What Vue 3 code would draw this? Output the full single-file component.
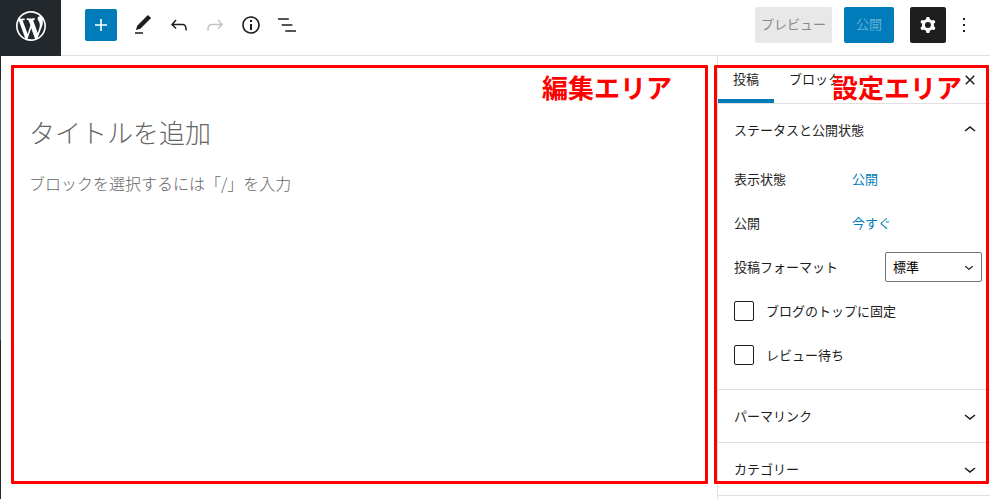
<template>
  <div class="editor">
    <header class="header">
      <a href="#" class="logo" aria-label="投稿一覧">
        <svg viewBox="-2 -2 24 24" width="36" height="36" aria-hidden="true">
          <path :d="icons.wordpress" />
        </svg>
      </a>
      <div class="toolbar">
        <button type="button" class="inserter" aria-label="ブロックを追加">
          <svg viewBox="0 0 24 24" width="24" height="24"><path :d="icons.plus" /></svg>
        </button>
        <button
          v-for="tool in tools"
          :key="tool.icon"
          type="button"
          class="icon-button"
          :aria-label="tool.label"
          :disabled="tool.disabled"
        >
          <svg viewBox="0 0 24 24" width="24" height="24"><path :d="icons[tool.icon]" /></svg>
        </button>
      </div>
      <div class="actions">
        <button type="button" class="preview" disabled>プレビュー</button>
        <button type="button" class="publish" disabled>公開</button>
        <button type="button" class="icon-button settings" aria-label="設定">
          <svg viewBox="0 0 24 24" width="24" height="24">
            <path fill-rule="evenodd" :d="icons.cog" />
          </svg>
        </button>
        <button type="button" class="icon-button" aria-label="オプション">
          <svg viewBox="0 0 24 24" width="24" height="24"><path :d="icons.more" /></svg>
        </button>
      </div>
    </header>

    <div class="body">
      <main class="content">
        <input v-model="title" class="title" placeholder="タイトルを追加" aria-label="タイトルを追加" />
        <input
          v-model="text"
          class="paragraph"
          placeholder="ブロックを選択するには「/」を入力"
          aria-label="ブロック"
        />
        <div class="area area-edit"><span class="area-name">編集エリア</span></div>
      </main>

      <aside class="sidebar">
        <div class="tabs">
          <button type="button" class="tab active">投稿</button>
          <button type="button" class="tab">ブロック</button>
          <button type="button" class="icon-button close" aria-label="設定を閉じる">
            <svg viewBox="0 0 24 24" width="24" height="24"><path :d="icons.close" /></svg>
          </button>
        </div>

        <section class="panel">
          <button type="button" class="panel-title" @click="open = !open">
            <span>ステータスと公開状態</span>
            <svg viewBox="0 0 24 24" width="24" height="24">
              <path :d="open ? icons.up : icons.down" />
            </svg>
          </button>
          <div v-if="open" class="panel-body">
            <div class="row">
              <span class="row-label">表示状態</span>
              <a href="#">公開</a>
            </div>
            <div class="row">
              <span class="row-label">公開</span>
              <a href="#">今すぐ</a>
            </div>
            <div class="row">
              <label class="format-label" for="post-format">投稿フォーマット</label>
              <div class="select">
                <select id="post-format" v-model="format">
                  <option value="standard">標準</option>
                </select>
                <svg viewBox="0 0 24 24" width="18" height="18"><path :d="icons.down" /></svg>
              </div>
            </div>
            <div class="row">
              <input id="sticky" v-model="sticky" type="checkbox" />
              <label for="sticky">ブログのトップに固定</label>
            </div>
            <div class="row">
              <input id="pending" v-model="pending" type="checkbox" />
              <label for="pending">レビュー待ち</label>
            </div>
          </div>
        </section>

        <section v-for="name in ['パーマリンク', 'カテゴリー']" :key="name" class="panel">
          <button type="button" class="panel-title">
            <span>{{ name }}</span>
            <svg viewBox="0 0 24 24" width="24" height="24"><path :d="icons.down" /></svg>
          </button>
        </section>
        <div class="area area-settings"><span class="area-name">設定エリア</span></div>
      </aside>
    </div>
  </div>
</template>

<script setup>
import { ref } from 'vue'

const title = ref('')
const text = ref('')
const open = ref(true)
const format = ref('standard')
const sticky = ref(false)
const pending = ref(false)

const tools = [
  { icon: 'edit', label: 'ツール' },
  { icon: 'undo', label: '元に戻す' },
  { icon: 'redo', label: 'やり直す', disabled: true },
  { icon: 'info', label: '詳細' },
  { icon: 'list', label: 'リスト表示' },
]

const icons = {
  wordpress:
    'M20 10c0-5.51-4.49-10-10-10C4.48 0 0 4.49 0 10c0 5.52 4.48 10 10 10 5.51 0 10-4.48 10-10zM7.78 15.37L4.37 6.22c.55-.02 1.17-.08 1.17-.08.5-.06.44-1.13-.06-1.11 0 0-1.45.11-2.37.11-.18 0-.37 0-.58-.01C4.12 2.69 6.87 1.11 10 1.11c2.33 0 4.45.87 6.05 2.34-.68-.11-1.65.39-1.65 1.58 0 .74.45 1.36.9 2.1.35.61.55 1.36.55 2.46 0 1.49-1.4 5-1.4 5l-3.03-8.37c.54-.02.82-.17.82-.17.5-.05.44-1.25-.06-1.22 0 0-1.44.12-2.38.12-.87 0-2.33-.12-2.33-.12-.5-.03-.56 1.2-.06 1.22l.92.08 1.26 3.41zM17.41 10c.24-.64.74-1.87.43-4.25.7 1.29 1.05 2.71 1.05 4.25 0 3.29-1.73 6.24-4.4 7.78.97-2.59 1.94-5.2 2.92-7.78zM6.1 18.09C3.12 16.65 1.11 13.53 1.11 10c0-1.3.23-2.48.72-3.59C3.25 10.3 4.67 14.2 6.1 18.09zm4.03-6.63l2.58 6.98c-.86.29-1.76.45-2.71.45-.79 0-1.57-.11-2.29-.33.81-2.38 1.62-4.74 2.42-7.1z',
  plus: 'M18 11.2h-5.2V6h-1.6v5.2H6v1.6h5.2V18h1.6v-5.2H18z',
  edit: 'M20.1 5.1L16.9 2 6.2 12.7l-1.3 4.4 4.5-1.3L20.1 5.1zM4 20.8h8v-1.5H4v1.5z',
  undo: 'M18.3 11.7c-.6-.6-1.4-.9-2.3-.9H6.7l2.9-3.3-1.1-1-4.5 5L8.5 16l1-1-2.7-2.7H16c.5 0 .9.2 1.3.5 1 1 1 3.4 1 4.5v.3h1.5v-.2c0-1.5 0-4.3-1.5-5.7z',
  redo: 'M15.6 6.5l-1.1 1 2.9 3.3H8c-.9 0-1.7.3-2.3.9-1.4 1.5-1.4 4.2-1.4 5.6v.2h1.5v-.3c0-1.1 0-3.5 1-4.5.3-.3.7-.5 1.3-.5h9.2L14.5 15l1.1 1.1 4.6-4.6-4.6-5z',
  info: 'M12 3.2c-4.8 0-8.8 3.9-8.8 8.8 0 4.8 3.9 8.8 8.8 8.8 4.8 0 8.8-3.9 8.8-8.8 0-4.8-4-8.8-8.8-8.8zm0 16c-4 0-7.2-3.3-7.2-7.2C4.8 8 8 4.8 12 4.8s7.2 3.3 7.2 7.2c0 4-3.2 7.2-7.2 7.2zM11 17h2v-6h-2v6zm0-8h2V7h-2v2z',
  list: 'M13.8 5.2H3v1.5h10.8V5.2zm-3.6 12v1.5H21v-1.5H10.2zm7.2-6H6.6v1.5h10.8v-1.5z',
  cog: 'M10.289 4.836A1 1 0 0111.275 4h1.306a1 1 0 01.987.836l.244 1.466c.787.26 1.503.679 2.108 1.218l1.393-.522a1 1 0 011.216.437l.653 1.13a1 1 0 01-.23 1.273l-1.148.944a6.025 6.025 0 010 2.435l1.149.946a1 1 0 01.23 1.272l-.653 1.13a1 1 0 01-1.216.437l-1.394-.522c-.605.54-1.32.958-2.108 1.218l-.244 1.466a1 1 0 01-.987.836h-1.306a1 1 0 01-.986-.836l-.244-1.466a5.995 5.995 0 01-2.108-1.218l-1.394.522a1 1 0 01-1.217-.436l-.653-1.131a1 1 0 01.23-1.272l1.149-.946a6.026 6.026 0 010-2.435l-1.148-.944a1 1 0 01-.23-1.272l.653-1.131a1 1 0 011.217-.437l1.393.522a5.994 5.994 0 012.108-1.218l.244-1.466zM14.929 12a3 3 0 11-6 0 3 3 0 016 0z',
  more: 'M13 19h-2v-2h2v2zm0-6h-2v-2h2v2zm0-6h-2V5h2v2z',
  close:
    'M12 13.06l3.712 3.713 1.061-1.06L13.061 12l3.712-3.712-1.06-1.06L12 10.938 8.288 7.227l-1.061 1.06L10.939 12l-3.712 3.712 1.06 1.061L12 13.061z',
  up: 'M6.5 12.4L12 8l5.5 4.4-.9 1.2L12 10l-4.5 3.6-1-1.2z',
  down: 'M17.5 11.6L12 16l-5.5-4.4.9-1.2L12 14l4.5-3.6 1 1.2z',
}
</script>

<style>
body {
  margin: 0;
  background: #fff;
}
</style>

<style scoped>
/* the admin menu shows as a thin strip at the left edge */
.editor {
  display: flex;
  flex-direction: column;
  height: 100vh;
  overflow: hidden;
  box-sizing: border-box;
  padding-left: 1px;
  background: linear-gradient(#23282d 80px, #3f5a70 80px, #3f5a70 340px, #23282d 340px);
  color: #1e1e1e;
  font-family: 'Noto Sans CJK JP', sans-serif;
  font-size: 13px;
  font-weight: 400;
  line-height: 20px;
}

.editor * {
  box-sizing: border-box;
}

svg {
  display: block;
  flex: none;
  fill: currentColor;
}

button,
input,
select {
  margin: 0;
  padding: 0;
  border: 0;
  background: none;
  color: inherit;
  font: inherit;
}

button {
  cursor: pointer;
}

.header {
  display: flex;
  flex: none;
  height: 56px;
  background: #fff;
}

.logo {
  display: flex;
  width: 60px;
  padding-bottom: 4px;
  align-items: center;
  justify-content: center;
  background: #23282d;
  color: #fff;
}

.toolbar,
.actions {
  display: flex;
  align-items: center;
  padding-bottom: 5px;
  border-bottom: 1px solid #e0e0e0;
}

.toolbar {
  flex: 1;
  padding-left: 24px;
}

.actions {
  padding-right: 8px;
}

.inserter {
  display: flex;
  width: 32px;
  height: 32px;
  margin-right: 8px;
  align-items: center;
  justify-content: center;
  border-radius: 2px;
  background: #007cba;
  color: #fff;
}

.icon-button {
  display: flex;
  width: 36px;
  height: 36px;
  align-items: center;
  justify-content: center;
}

.icon-button:disabled {
  color: #c4c4c4;
}

.preview,
.publish {
  height: 36px;
  margin-right: 12px;
  padding: 0 6px 2px;
  border-radius: 2px;
  background: #e8e8e8;
  color: #8a8a8a;
}

.publish {
  margin-right: 16px;
  padding: 0 12px 2px;
  background: #007cba;
  color: #66b0d6;
}

.settings {
  border-radius: 2px;
  background: #1e1e1e;
  color: #fff;
}

.body {
  display: flex;
  flex: 1;
  min-height: 0;
  background: #fff;
}

.content {
  position: relative;
  display: flex;
  flex: 1;
  min-width: 0;
  padding: 55px 28px;
  flex-direction: column;
  gap: 12px;
}

.title {
  height: 40px;
  font-size: 26px;
}

.paragraph {
  height: 40px;
  font-size: 16px;
}

.title,
.paragraph {
  font-weight: 300;
  outline: none;
}

.title::placeholder,
.paragraph::placeholder {
  color: #666;
  opacity: 1;
}

.sidebar {
  position: relative;
  width: 273px;
  flex: none;
  border-left: 1px solid #e0e0e0;
}

.tabs {
  display: flex;
  height: 48px;
  border-bottom: 1px solid #e0e0e0;
}

.tab {
  padding: 2px 15px 0;
  border-bottom: 4px solid transparent;
}

.tab.active {
  border-bottom-color: #007cba;
}

.close {
  height: 48px;
  margin: 0 2px 0 auto;
}

.panel {
  border-bottom: 1px solid #e0e0e0;
}

.panel-title {
  display: flex;
  width: 100%;
  height: 52px;
  padding: 0 8px 0 16px;
  align-items: center;
  justify-content: space-between;
}

.panel-body {
  padding: 1px 8px 12px 16px;
}

.row {
  display: flex;
  height: 44px;
  align-items: center;
}

.row-label {
  width: 118px;
}

.row a {
  color: #007cba;
  text-decoration: none;
}

.format-label {
  flex: 1;
}

.select {
  display: grid;
  width: 97px;
  align-items: center;
}

.select select {
  grid-area: 1 / 1;
  height: 30px;
  padding: 0 7px;
  border: 1px solid #757575;
  border-radius: 2px;
  appearance: none;
  color: #000;
}

.select svg {
  grid-area: 1 / 1;
  justify-self: end;
  margin-right: 4px;
  pointer-events: none;
}

.row input {
  width: 20px;
  height: 20px;
  margin-right: 12px;
  border: 1px solid #1e1e1e;
  border-radius: 2px;
  appearance: none;
}

.row input:checked {
  background: #007cba;
}

/* red frames naming the two parts of the screen */
.area {
  position: absolute;
  top: 9px;
  bottom: 15px;
  border: 3px solid #f00;
  border-radius: 1px;
  color: #f00;
  font-size: 26px;
  font-weight: 700;
  line-height: 38px;
  text-align: right;
  pointer-events: none;
}

.area-edit {
  right: 9px;
  left: 10px;
  padding-right: 33px;
}

.area-settings {
  right: 1px;
  left: -4px;
  padding-right: 24px;
}
</style>
